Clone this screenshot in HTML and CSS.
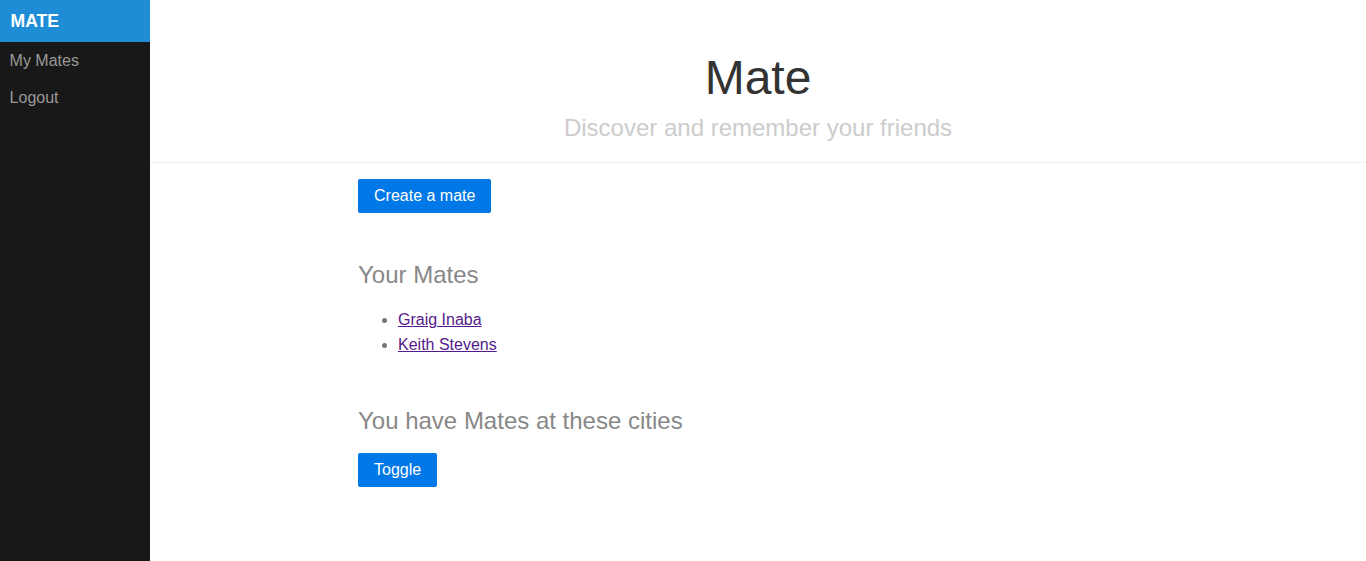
FILE: index.html
```html
<!DOCTYPE html>
<html>
<head>
<meta charset="utf-8">
<title>Mate</title>
<link rel="stylesheet" href="styles.css">
</head>
<body>
<div class="layout">
  <nav class="menu">
    <a class="menu-heading" href="#">MATE</a>
    <ul class="menu-list">
      <li><a class="menu-link" href="#">My Mates</a></li>
      <li><a class="menu-link" href="#">Logout</a></li>
    </ul>
  </nav>
  <main class="main">
    <header class="header">
      <h1 class="title">Mate</h1>
      <h2 class="subtitle">Discover and remember your friends</h2>
    </header>
    <section class="content">
      <p class="actions"><button class="btn">Create a mate</button></p>
      <h2 class="subhead subhead-first">Your Mates</h2>
      <ul class="mates">
        <li><a class="mate-link" href="#">Graig Inaba</a></li>
        <li><a class="mate-link" href="#">Keith Stevens</a></li>
      </ul>
      <h2 class="subhead">You have Mates at these cities</h2>
      <p class="actions"><button class="btn">Toggle</button></p>
    </section>
  </main>
</div>
</body>
</html>
```

FILE: styles.css
```css
html, body {
  margin: 0;
  padding: 0;
  height: 100%;
}
body {
  font-family: "Liberation Sans", Arial, sans-serif;
  font-size: 16px;
  color: #777;
}
.layout {
  display: flex;
  min-height: 100%;
}
.menu {
  width: 150px;
  flex: none;
  background: #191818;
  display: flex;
  flex-direction: column;
}
.menu-heading {
  display: block;
  background: #1f8dd6;
  color: #fff;
  font-size: 110%;
  font-weight: bold;
  text-decoration: none;
  padding: 0.5em 0.6em;
  line-height: 24px;
}
.menu-list {
  list-style: none;
  margin: 0;
  padding: 0;
}
.menu-link {
  display: block;
  color: #999;
  text-decoration: none;
  padding: 8px 0.6em;
  line-height: 21px;
}
.main {
  flex: 1;
}
.header {
  text-align: center;
  color: #333;
  padding: 2.5em 2em 0;
  border-bottom: 1px solid #eee;
}
.title {
  margin: 0.2em 0;
  font-size: 3em;
  font-weight: 300;
  line-height: 1.15;
}
.subtitle {
  margin: 0 0 20px;
  font-size: 1.5em;
  font-weight: 300;
  color: #ccc;
  line-height: 1.15;
}
.content {
  max-width: 800px;
  margin: 0 auto 50px;
  padding: 0 2em;
  line-height: 1.6em;
}
.actions {
  margin: 1em 0;
}
.btn {
  font-family: inherit;
  font-size: 100%;
  line-height: normal;
  color: #fff;
  background: #0078e7;
  border: 0;
  border-radius: 2px;
  padding: 0.5em 1em;
  cursor: pointer;
}
.subhead {
  margin: 50px 0 20px;
  font-weight: 300;
  font-size: 1.5em;
  color: #888;
}
.subhead-first {
  margin-top: 49px;
  margin-bottom: 19px;
}
.mates {
  margin: 0;
  padding-left: 40px;
}
.mate-link {
  color: #551a8b;
}
```
